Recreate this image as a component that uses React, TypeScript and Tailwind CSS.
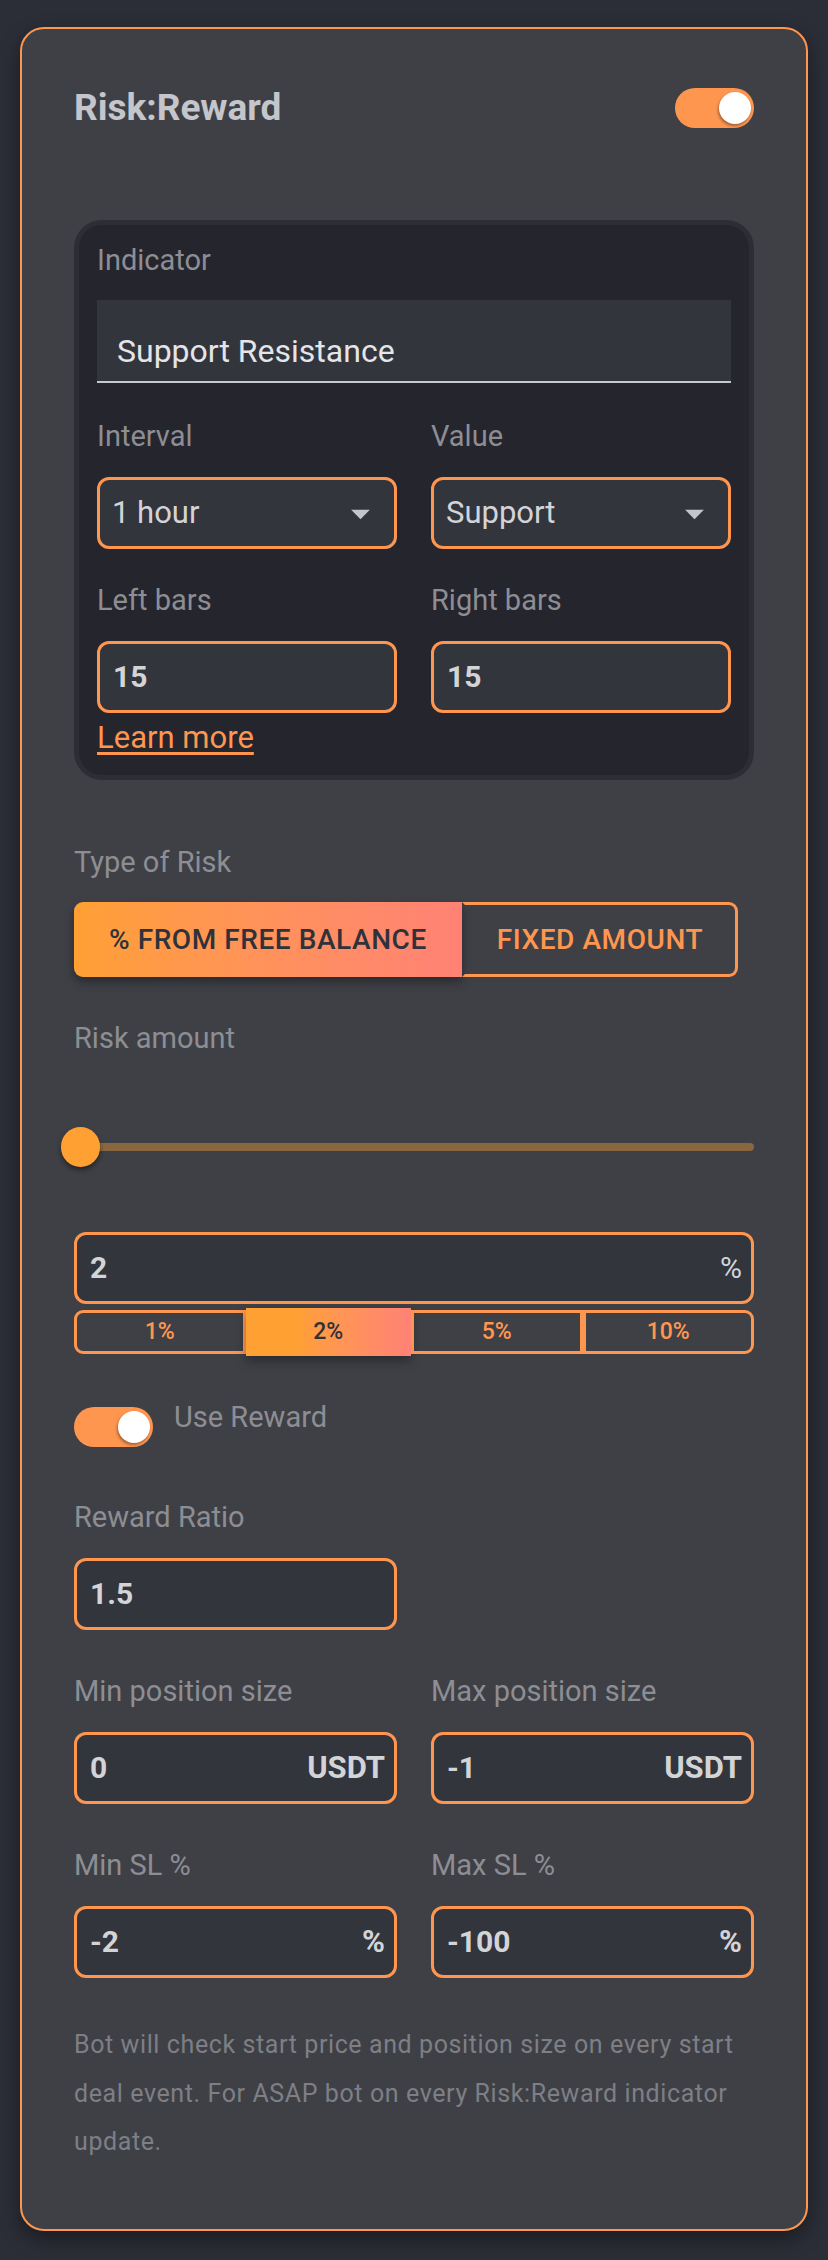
import React from "react";

const font = { fontFamily: "Roboto, 'Noto Sans', sans-serif" };

function Label({ children }: { children: React.ReactNode }) {
  return <div className="text-[29px] leading-[34px] text-[#8d8e94]">{children}</div>;
}

function Field({ value, suffix, boldSuffix = true }: { value: string; suffix?: string; boldSuffix?: boolean }) {
  return (
    <div className="flex h-[72px] items-center justify-between rounded-[12px] border-[3px] border-[#ff9650] bg-[#33353d] pl-[13px] pr-[9px]">
      <span className="text-[30px] font-bold leading-[36px] text-[#d3d4d8]">{value}</span>
      {suffix && (
        <span
          className={`leading-[36px] text-[#d3d4d8] ${
            boldSuffix ? "text-[31px] font-bold" : "text-[30px] font-normal"
          }`}
        >
          {suffix}
        </span>
      )}
    </div>
  );
}

function Select({ value }: { value: string }) {
  return (
    <div className="flex h-[72px] items-center justify-between rounded-[12px] border-[3px] border-[#ff9650] bg-[#33353d] pl-[12px] pr-[11px]">
      <span className="text-[31px] leading-[36px] text-[#d3d4d8]">{value}</span>
      <svg width="45" height="45" viewBox="0 0 24 24" fill="#c5c6cb">
        <path d="M7 10l5 5 5-5z" />
      </svg>
    </div>
  );
}

function Switch() {
  return (
    <div className="relative h-[40px] w-[79px] shrink-0 rounded-full bg-[#ff9650]">
      <div className="absolute right-[3px] top-[4px] h-[32px] w-[32px] rounded-full bg-white shadow-[-1px_2px_3px_rgba(0,0,0,0.35)]" />
    </div>
  );
}

export default function App() {
  const chips = ["1%", "2%", "5%", "10%"];
  return (
    <div className="min-h-screen bg-[#2b2e37] px-5 pb-[29px] pt-[27px]" style={font}>
      <div className="rounded-3xl border-2 border-[#ff9650] bg-[#3f4046] px-[52px] pb-[62px] pt-[57px] shadow-[0_8px_20px_rgba(0,0,0,0.4)]">
        {/* header */}
        <div className="flex h-[44px] items-center justify-between">
          <h1 className="text-[37px] font-bold leading-[44px] text-[#c5c6cb]">Risk:Reward</h1>
          <Switch />
        </div>

        {/* indicator box */}
        <div className="mt-[90px] rounded-[28px] border-[5px] border-[#2d2e35] bg-[#25252e] px-[18px] pb-[20px] pt-[18px]">
          <Label>Indicator</Label>
          <div className="mt-[23px] h-[83px] border-b-2 border-[#c8c8cc] bg-[#33353d] px-[20px] pt-[33px]">
            <span className="text-[32px] leading-[36px] text-[#e4e5e8]">Support Resistance</span>
          </div>

          <div className="mt-[36px] grid grid-cols-2 gap-x-[34px]">
            <div>
              <Label>Interval</Label>
              <div className="mt-[24px]">
                <Select value="1 hour" />
              </div>
            </div>
            <div>
              <Label>Value</Label>
              <div className="mt-[24px]">
                <Select value="Support" />
              </div>
            </div>
          </div>

          <div className="mt-[34px] grid grid-cols-2 gap-x-[34px]">
            <div>
              <Label>Left bars</Label>
              <div className="mt-[24px]">
                <Field value="15" />
              </div>
            </div>
            <div>
              <Label>Right bars</Label>
              <div className="mt-[24px]">
                <Field value="15" />
              </div>
            </div>
          </div>

          <a className="mt-[8px] block w-fit text-[31px] leading-[34px] text-[#ff9650] underline underline-offset-[4px]">
            Learn more
          </a>
        </div>

        {/* type of risk */}
        <div className="mt-[65px]">
          <Label>Type of Risk</Label>
        </div>
        <div className="mt-[23px] flex h-[75px]">
          <button className="h-full rounded-l-[9px] bg-gradient-to-r from-[#ffa033] to-[#ff8275] px-[35px] text-[28px] font-medium uppercase leading-[32px] tracking-[0.02em] text-[#30323a] shadow-[0_5px_10px_rgba(0,0,0,0.35)]">
            % from free balance
          </button>
          <button className="h-full rounded-r-[9px] border-[3px] border-[#ff9650] border-l-transparent px-[32px] text-[28px] font-medium uppercase leading-[32px] tracking-[0.02em] text-[#ff9650]">
            Fixed amount
          </button>
        </div>

        {/* risk amount */}
        <div className="mt-[44px]">
          <Label>Risk amount</Label>
        </div>
        <div className="relative mt-[72px] flex h-[40px] items-center">
          <div className="ml-[5px] h-[8px] w-full rounded-full bg-[#8a6640]" />
          <div className="absolute left-[-13px] top-0 h-[40px] w-[39px] rounded-full bg-[#ffa033] shadow-[0_3px_5px_rgba(0,0,0,0.45)]" />
        </div>

        <div className="mt-[65px]">
          <Field value="2" suffix="%" boldSuffix={false} />
        </div>
        <div className="mt-[6px] flex h-[44px]">
          {chips.map((c, i) =>
            c === "2%" ? (
              <div
                key={c}
                className="-my-[2px] flex flex-1 items-center justify-center bg-gradient-to-r from-[#ffa033] from-30% to-[#ff8275] text-[23px] font-medium text-[#30323a] shadow-[0_5px_10px_rgba(0,0,0,0.35)]"
              >
                {c}
              </div>
            ) : (
              <div
                key={c}
                className={`flex flex-1 items-center justify-center border-[3px] border-[#ff9650] text-[23px] font-medium text-[#ff9650] ${
                  i === 0 ? "rounded-l-[9px]" : ""
                } ${i === chips.length - 1 ? "rounded-r-[9px]" : ""}`}
              >
                {c}
              </div>
            )
          )}
        </div>

        {/* use reward */}
        <div className="mt-[46px] flex items-start gap-[21px]">
          <div className="mt-[7px]">
            <Switch />
          </div>
          <Label>Use Reward</Label>
        </div>

        <div className="mt-[53px]">
          <Label>Reward Ratio</Label>
        </div>
        <div className="mt-[24px] grid grid-cols-2 gap-x-[34px]">
          <Field value="1.5" />
        </div>

        <div className="mt-[44px] grid grid-cols-2 gap-x-[34px]">
          <div>
            <Label>Min position size</Label>
            <div className="mt-[24px]">
              <Field value="0" suffix="USDT" />
            </div>
          </div>
          <div>
            <Label>Max position size</Label>
            <div className="mt-[24px]">
              <Field value="-1" suffix="USDT" />
            </div>
          </div>
        </div>

        <div className="mt-[44px] grid grid-cols-2 gap-x-[34px]">
          <div>
            <Label>Min SL %</Label>
            <div className="mt-[24px]">
              <Field value="-2" suffix="%" />
            </div>
          </div>
          <div>
            <Label>Max SL %</Label>
            <div className="mt-[24px]">
              <Field value="-100" suffix="%" />
            </div>
          </div>
        </div>

        <p className="mt-[43px] text-[25px] leading-[48.5px] tracking-[0.6px] text-[#7e7f85]">
          Bot will check start price and position size on every start deal event. For ASAP bot on every Risk:Reward
          indicator update.
        </p>
      </div>
    </div>
  );
}
